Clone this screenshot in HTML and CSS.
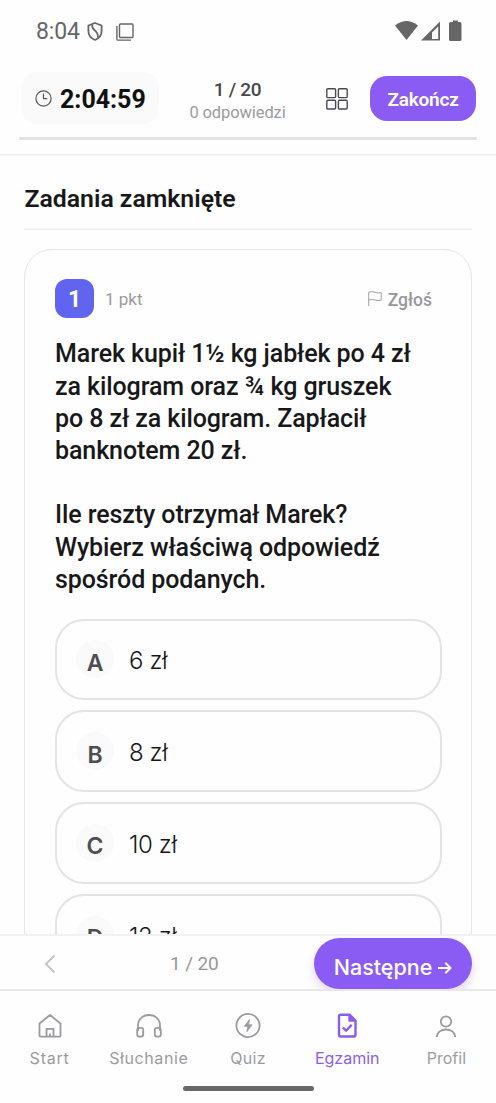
FILE: index.html
```html
<!DOCTYPE html>
<html lang="pl">
<head>
<meta charset="utf-8">
<title>Egzamin</title>
<link rel="stylesheet" href="styles.css">
</head>
<body>
<div class="app">
  <div class="status">
    <span class="clock">8:04</span>
    <svg class="shield" width="16" height="19" viewBox="0 0 16 19" fill="none" stroke="#666" stroke-width="1.8"><path d="M8 1 14.600 3.500V9c0 4-2.600 7.300-6.600 9C4 16.300 1.400 13 1.400 9V3.500Z"/><path stroke-width="1.700" d="M5.200 2.600C4 9.500 12 7.500 10.800 15.500"/></svg>
    <svg class="copy" width="18" height="18" viewBox="0 0 18 18" fill="none" stroke="#666" stroke-width="1.400"><rect x="3.500" y="1" width="13.500" height="13.500" rx="1"/><path d="M.9 3v13.200q0 .9.9.9H15"/></svg>
    <svg class="signals" width="70" height="22" viewBox="0 0 70 22" fill="#666"><path d="M0 5.500Q11.500-3.500 23 5.500L11.500 20Z"/><path fill-rule="evenodd" d="M45 1.500V20.500H26ZM43.200 6.500 37 12.500V19H43.200Z"/><path d="M54 3.500Q54 2 55.500 2H58V.5H63V2h2q1.500 0 1.500 1.500V19.500Q66.500 21 65 21H55.500Q54 21 54 19.500Z"/></svg>
  </div>

  <header class="header">
    <div class="header-row">
      <div class="timer">
        <svg width="17" height="17" viewBox="0 0 17 17" fill="none" stroke="#555" stroke-width="1.200"><circle cx="8.500" cy="8.500" r="7.600"/><path d="M8.500 3.500V8.700H12.300"/></svg>
        <span>2:04:59</span>
      </div>
      <div class="progress-text"><b>1 / 20</b><span>0 odpowiedzi</span></div>
      <svg class="grid" width="22" height="22" viewBox="0 0 22 22" fill="none" stroke="#4a4a50" stroke-width="1.400"><rect x=".8" y=".8" width="8.800" height="8.800" rx="1"/><rect x="12.400" y=".8" width="8.800" height="8.800" rx="1"/><rect x=".8" y="12.200" width="8.800" height="8.800" rx="1"/><rect x="12.400" y="12.200" width="8.800" height="8.800" rx="1"/></svg>
      <button class="finish">Zakończ</button>
    </div>
    <div class="track"></div>
  </header>

  <main class="content">
    <h1 class="title">Zadania zamknięte</h1>
    <section class="card">
      <div class="card-head">
        <span class="number">1</span>
        <span class="points">1 pkt</span>
        <span class="report"><svg width="14" height="15" viewBox="0 0 14 15" fill="none" stroke="#a0a0a5" stroke-width="1"><path d="M.7 15V1.300Q4-.1 7 1.300T13.200 1.600V9.200Q10 10.200 7 9T.7 9"/></svg><span>Zgłoś</span></span>
      </div>
      <div class="question">
        <p>Marek kupił 1½ kg jabłek po 4 zł<br>za kilogram oraz ¾ kg gruszek<br>po 8 zł za kilogram. Zapłacił<br>banknotem 20 zł.</p>
        <p>Ile reszty otrzymał Marek?<br>Wybierz właściwą odpowiedź<br>spośród podanych.</p>
      </div>
      <div class="options">
        <div class="option"><span class="letter">A</span><span class="value">6 zł</span></div>
        <div class="option"><span class="letter">B</span><span class="value">8 zł</span></div>
        <div class="option"><span class="letter">C</span><span class="value">10 zł</span></div>
        <div class="option"><span class="letter">D</span><span class="value">12 zł</span></div>
      </div>
    </section>
  </main>

  <div class="pager">
    <svg width="12" height="20" viewBox="0 0 12 20" fill="none" stroke="#c4c4c6" stroke-width="2"><path d="M10.500 1.500 2 10l8.500 8.500"/></svg>
    <span class="page">1 / 20</span>
    <button class="next"><span>Następne</span><svg width="14" height="14" viewBox="0 0 14 14" fill="none" stroke="#fff" stroke-width="2"><path d="M0 8H12.200M7.300 2.800 12.400 8l-5.100 5.200"/></svg></button>
  </div>

  <nav class="tabs">
    <a class="tab start"><svg width="26" height="26" viewBox="0 0 26 26" fill="none" stroke="#9b9b9f" stroke-width="1.800" stroke-linejoin="round"><path d="M2.500 10.500 13 2l10.500 8.500V22.500q0 1.200-1.200 1.200H3.700q-1.200 0-1.200-1.200ZM9.500 23.500V15.800h7v7.700M13 20.500v3"/></svg><span>Start</span></a>
    <a class="tab listening"><svg width="26" height="26" viewBox="0 0 26 26" fill="none" stroke="#9b9b9f" stroke-width="1.800"><path d="M2 18V12.500C2 6 7 2 13 2s11 4 11 10.500V18"/><rect x="1.200" y="14.800" width="6" height="8.800" rx="2"/><rect x="18.800" y="14.800" width="6" height="8.800" rx="2"/></svg><span>Słuchanie</span></a>
    <a class="tab quiz"><svg width="26" height="26" viewBox="0 0 26 26" fill="none" stroke="#9b9b9f" stroke-width="1.800"><circle cx="13" cy="12.500" r="11.600"/><path d="M14.500 6.500 9.300 13.300h3.500l-1 5.500 5.300-7h-3.600Z" fill="#9b9b9f" stroke-width=".8"/></svg><span>Quiz</span></a>
    <a class="tab active"><svg width="26" height="26" viewBox="0 0 26 26" fill="none" stroke="#8b5cf0" stroke-width="2.400" stroke-linejoin="round"><path d="M15.500 1.700H6.700Q5 1.700 5 3.400V21.800q0 1.700 1.700 1.700H19.800q1.700 0 1.700-1.700V7.500Z"/><path d="M15.500 2V7.500H21.500" fill="#8b5cf0"/><path d="M8.800 14.500l3.300 3.200 5.600-6"/></svg><span>Egzamin</span></a>
    <a class="tab"><svg width="26" height="26" viewBox="0 0 26 26" fill="none" stroke="#9b9b9f" stroke-width="1.800"><circle cx="13" cy="8.500" r="5.200"/><path d="M3.800 24C4 14 22 14 22.200 24"/></svg><span>Profil</span></a>
  </nav>
  <div class="home"></div>
</div>
</body>
</html>
```
FILE: styles.css
```css
* { box-sizing: border-box; }
body { margin: 0; background: #fefefe; font-family: Roboto, sans-serif; color: #18181a; }
.app { width: 496px; height: 1103px; display: flex; flex-direction: column; overflow: hidden; }
button { border: 0; padding: 0; color: #fff; font-family: inherit; }
svg { display: block; flex: none; }
p, h1 { margin: 0; }

.status { flex: none; height: 62px; display: flex; align-items: center; padding: 0 31px 0 36px; color: #666; }
.clock { font-size: 23px; letter-spacing: -.1px; padding-top: 1px; }
.shield { margin: 1px 0 0 7px; }
.copy { margin: 1px 0 0 13px; }
.signals { margin-left: auto; }

.header { flex: none; height: 94px; padding: 10px 20px 0 21px; border-bottom: 2px solid #f3f3f4; }
.header-row { display: flex; align-items: center; height: 52px; }
.timer { flex: none; width: 138px; height: 52px; border-radius: 16px; background: #fafafa; display: flex; align-items: center; padding: 3px 0 0 14px; gap: 8px; font-size: 25px; font-weight: 700; color: #111; }
.timer svg { margin-top: -3px; }
.progress-text { flex: none; width: 157px; display: flex; flex-direction: column; align-items: center; line-height: 23px; color: #9b9b9f; font-size: 16.500px; letter-spacing: -.1px; margin-top: 5px; }
.progress-text b { font-size: 19px; font-weight: 500; letter-spacing: -.3px; color: #48484c; }
.grid { margin: 1px 0 0 10px; }
.finish { margin: 1px 0 0 auto; padding-top: 2px; width: 106px; height: 45px; border-radius: 17px; background: #8b5cf3; font-size: 19px; font-weight: 600; letter-spacing: -.2px; }
.track { height: 3px; margin: 13px 0 0 -2px; width: 458px; background: #e2e2e2; border-radius: 2px; }

.content { flex: 1; min-height: 0; overflow: hidden; padding: 0 24px; }
.title { height: 74px; border-bottom: 2px solid #f2f2f2; padding-left: .5px; font-size: 24.800px; font-weight: 600; line-height: 86px; }
.card { margin-top: 19px; border: 1.500px solid #e5e5e6; border-radius: 28px; padding: 29px 29px 29px 30px; height: 800px; }
.card-head { display: flex; align-items: center; height: 39px; }
.number { width: 39px; height: 39px; border-radius: 12px; background: #6164ee; color: #fff; font-size: 23px; font-weight: 700; display: grid; place-items: center; padding-top: 2px; }
.points { margin-left: 11px; padding-top: 1px; font-size: 17px; color: #9b9b9f; }
.report { margin-left: auto; margin-right: 10px; display: flex; align-items: center; gap: 6px; font-size: 17.500px; font-weight: 500; color: #97979b; }
.report span { padding-top: 2px; }
.question { margin-top: 20.400px; font-size: 25px; line-height: 32.200px; font-weight: 500; letter-spacing: -.09px; white-space: nowrap; }
.question p + p { margin-top: 32.200px; }
.options { display: grid; gap: 10px; margin-top: 22.600px; }
.option { height: 81.700px; border: 2px solid #e4e4e5; border-radius: 29px; display: flex; align-items: center; padding-left: 19px; font-family: Inter, sans-serif; }
.letter { width: 38px; height: 38px; border-radius: 50%; background: #fafafb; display: grid; place-items: center; padding-top: 7px; font-size: 23px; font-weight: 600; color: #4e4e52; }
.value { margin: 3px 0 0 15px; font-size: 24px; font-weight: 300; letter-spacing: -.4px; }

.pager { flex: none; height: 57px; border-top: 2px solid #f2f2f3; border-bottom: 2px solid #e8e8e9; padding: 2px 24px 0 44px; display: flex; align-items: center; overflow: hidden; }
.page { margin-left: 114px; font-size: 19px; letter-spacing: -.1px; color: #97979b; }
.next { margin-left: auto; width: 158px; height: 51px; border-radius: 26px; background: #8b5cf3; box-shadow: 0 5px 9px #8b5cf340; display: flex; align-items: center; justify-content: center; gap: 6px; padding-top: 7px; font-family: Inter, sans-serif; font-size: 21.500px; font-weight: 500; }

.tabs { flex: none; height: 94px; display: flex; padding-top: 22px; font-family: Inter, sans-serif; font-size: 16px; color: #9b9b9f; }
.tab { flex: 1; display: flex; flex-direction: column; align-items: center; gap: 9px; line-height: 20px; }
.start { letter-spacing: .8px; }
.listening { letter-spacing: .6px; }
.quiz { letter-spacing: .3px; }
.active { color: #8b5cf0; }
.home { flex: none; width: 131px; height: 5px; margin: 1px auto 12px 183px; border-radius: 3px; background: #68686a; }
```
